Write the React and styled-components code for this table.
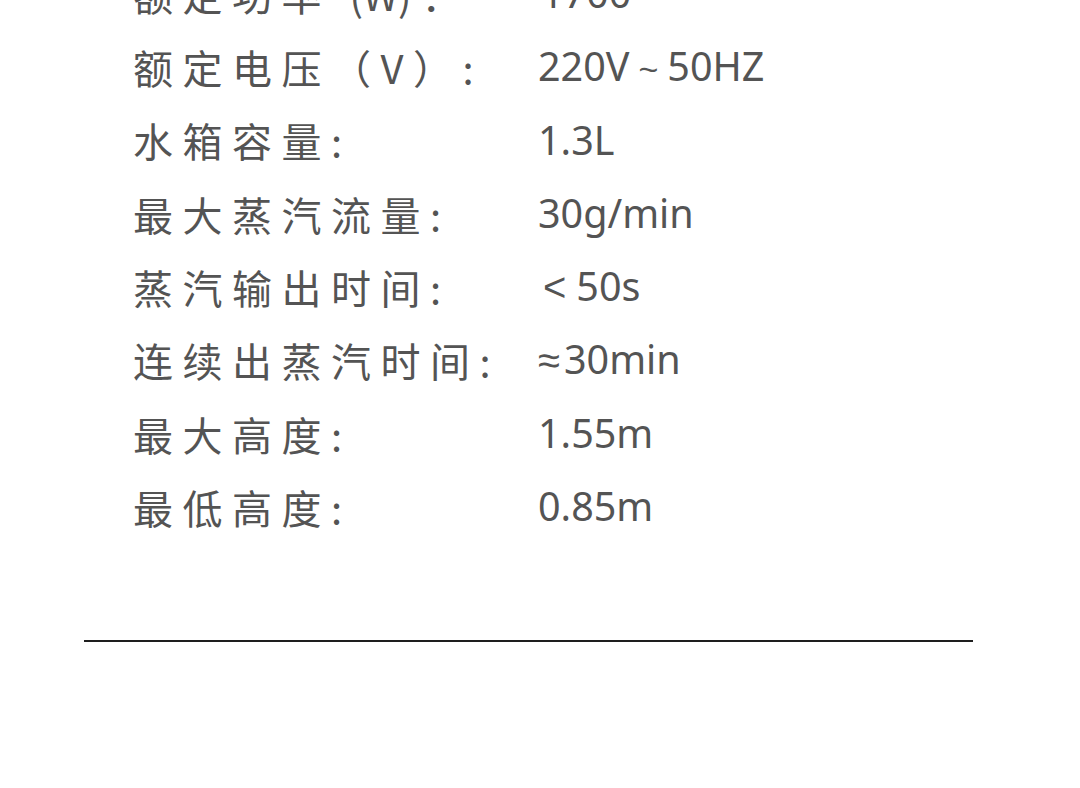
import React from 'react';
import styled, { createGlobalStyle } from 'styled-components';

const GlobalStyle = createGlobalStyle`
  html, body {
    margin: 0;
    padding: 0;
    background: #ffffff;
    overflow: hidden;
  }
`;

const Page = styled.div`
  width: 1080px;
  height: 788px;
  overflow: hidden;
  background: #fff;
  color: #545454;
`;

const SpecList = styled.div`
  margin-top: -43px;
  padding-left: 133px;
  display: flex;
  flex-direction: column;
`;

const Row = styled.div`
  display: grid;
  grid-template-columns: 405px 1fr;
  align-items: center;
  height: 73.33px;
`;

const Label = styled.div`
  font-family: "Noto Sans CJK SC", sans-serif;
  font-size: 40px;
  letter-spacing: 9.5px;
  white-space: nowrap;
  line-height: 1;
`;

const Tight = styled.span`
  letter-spacing: ${(p) => p.$gap || 0}px;
`;

const Value = styled.div`
  font-family: "Noto Sans", "Noto Sans CJK SC", sans-serif;
  font-size: 39.5px;
  white-space: nowrap;
  line-height: 1;
  padding-left: ${(p) => p.$indent || 0}px;
`;

const Symbol = styled.span`
  font-family: "Liberation Sans", sans-serif;
  font-size: ${(p) => p.$size || 40}px;
  margin: 0 ${(p) => p.$after || 0}px 0 ${(p) => p.$before || 0}px;
`;

const Divider = styled.div`
  margin: 96px 0 0 84px;
  width: 889px;
  height: 2px;
  background: #1e1e1e;
`;

const specs = [
  {
    label: (
      <>
        额定功率 <Tight>(W</Tight>)：
      </>
    ),
    value: '1700',
    indent: 3,
  },
  {
    label: (
      <>
        额定电压（V<Tight $gap={9.5}>）</Tight>:
      </>
    ),
    value: (
      <>
        220V<Symbol $size={34} $before={9} $after={9}>~</Symbol>50HZ
      </>
    ),
  },
  { label: '水箱容量:', value: '1.3L' },
  { label: '最大蒸汽流量:', value: '30g/min' },
  {
    label: '蒸汽输出时间:',
    value: (
      <>
        <Symbol $after={10}>&lt;</Symbol>50s
      </>
    ),
    indent: 5,
  },
  {
    label: '连续出蒸汽时间:',
    value: (
      <>
        <Symbol $after={4}>≈</Symbol>30min
      </>
    ),
  },
  { label: '最大高度:', value: '1.55m' },
  { label: '最低高度:', value: '0.85m' },
];

export default function App() {
  return (
    <Page>
      <GlobalStyle />
      <SpecList>
        {specs.map((s, i) => (
          <Row key={i}>
            <Label>{s.label}</Label>
            <Value $indent={s.indent}>{s.value}</Value>
          </Row>
        ))}
      </SpecList>
      <Divider />
    </Page>
  );
}
